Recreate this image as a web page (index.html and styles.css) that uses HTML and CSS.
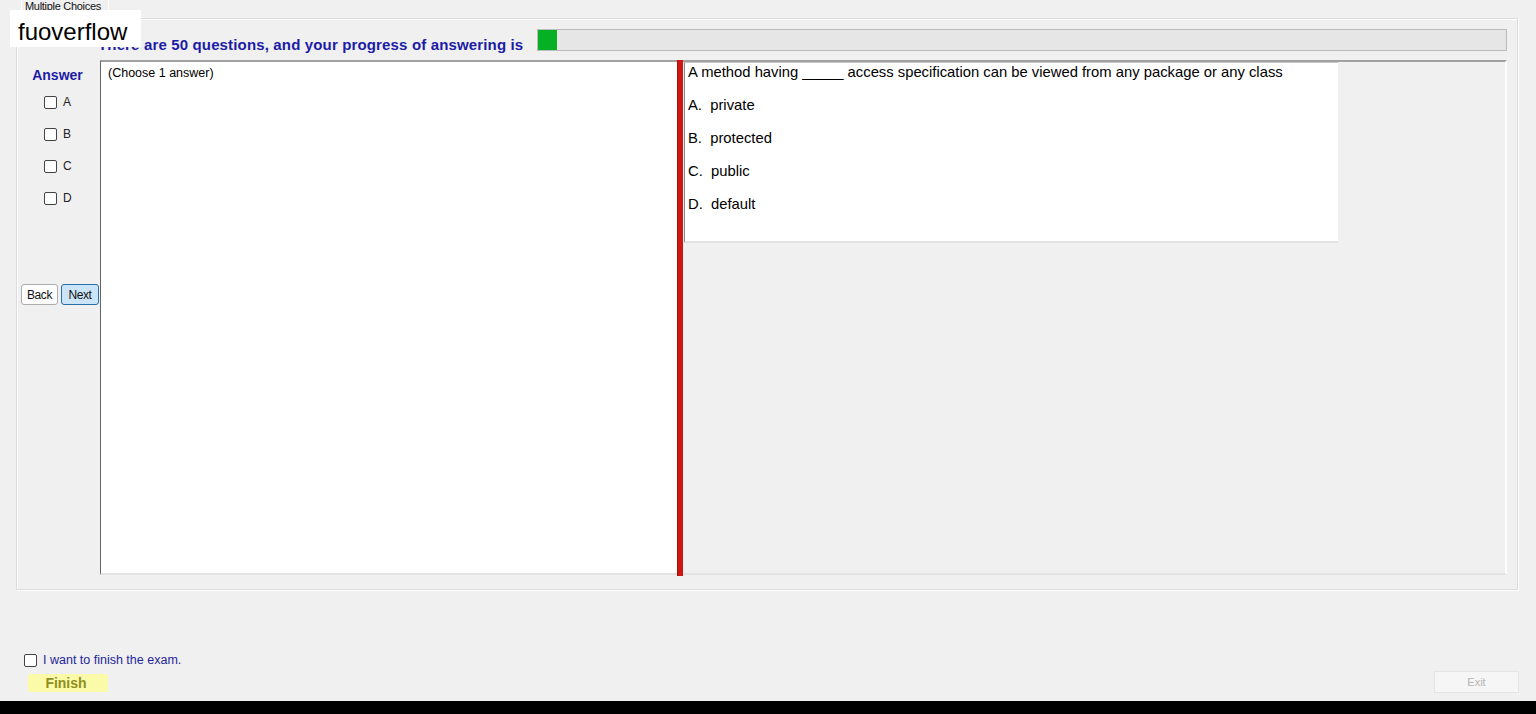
FILE: index.html
```html
<!DOCTYPE html>
<html lang="en">
<head>
    <meta charset="UTF-8">
    <meta name="viewport" content="width=device-width, initial-scale=1.0">
    <title>Multiple Choices</title>
    <link rel="stylesheet" href="styles.css">
</head>
<body>
    <div class="watermark">fuoverflow</div>

    <!-- Question group -->
    <div class="group">
        <div class="legend">Multiple Choices</div>

        <div class="header">
            <div class="progress-label">There are 50 questions, and your progress of answering is</div>
            <div class="progress">
                <div class="progress-fill" style="width: 19px"></div>
            </div>
        </div>

        <div class="content">
            <div class="sidebar">
                <div class="answer-title">Answer</div>
                <div class="choice"><span class="box"></span>A</div>
                <div class="choice"><span class="box"></span>B</div>
                <div class="choice"><span class="box"></span>C</div>
                <div class="choice"><span class="box"></span>D</div>
                <div class="nav">
                    <button class="btn">Back</button>
                    <button class="btn btn-active">Next</button>
                </div>
            </div>

            <div class="answer-panel">(Choose 1 answer)</div>
            <div class="splitter"></div>

            <div class="question-panel">
                <div class="question">
                    <p>A method having _____ access specification can be viewed from any package or any class</p>
                    <p>A.&nbsp; private</p>
                    <p>B.&nbsp; protected</p>
                    <p>C.&nbsp; public</p>
                    <p>D.&nbsp; default</p>
                </div>
            </div>
        </div>
    </div>

    <!-- Finish / exit -->
    <div class="footer">
        <div class="finish">
            <div class="finish-check"><span class="box"></span>I want to finish the exam.</div>
            <button class="finish-btn">Finish</button>
        </div>
        <button class="exit-btn" disabled>Exit</button>
    </div>
    <div class="taskbar"></div>
</body>
</html>
```

FILE: styles.css
```css
body {
    margin: 0;
    height: 714px;
    overflow: hidden;
    background-color: #f0f0f0;
    font-family: "Liberation Sans", Arial, sans-serif;
    color: #000;
    position: relative;
}
.watermark {
    position: absolute;
    left: 10px;
    top: 10px;
    width: 131px;
    height: 37px;
    overflow: hidden;
    box-sizing: border-box;
    padding-left: 8px;
    background-color: #fff;
    font-size: 24px;
    line-height: 43px;
    z-index: 2;
}
.group {
    position: relative;
    margin: 18px 18px 0 16px;
    height: 572px;
    box-sizing: border-box;
    border: 1px solid #dcdcdc;
    box-shadow: inset 1px 1px 0 #fff, 1px 1px 0 #fff;
    padding: 10px 10px 0 0;
}
.legend {
    position: absolute;
    left: 4px;
    top: -19px;
    width: 88px;
    height: 18px;
    box-sizing: border-box;
    border-left: 1px solid #fff;
    border-right: 1px solid #fff;
    padding-left: 3px;
    font-size: 11px;
    line-height: 13px;
    letter-spacing: -0.3px;
    color: #111;
}
.header {
    display: flex;
    align-items: flex-end;
    height: 22px;
}
.progress-label {
    width: 520px;
    flex: none;
    box-sizing: border-box;
    padding-left: 81px;
    font-size: 15px;
    font-weight: bold;
    letter-spacing: 0.15px;
    color: #1c1ca6;
    line-height: 16px;
    margin-bottom: -2px;
    white-space: nowrap;
}
.progress {
    flex: 1;
    height: 22px;
    box-sizing: border-box;
    border: 1px solid #bcbcbc;
    background-color: #e6e6e6;
}
.progress-fill {
    height: 100%;
    background-color: #06b025;
}
.content {
    display: flex;
    margin-top: 9px;
    height: 515px;
}
.sidebar {
    width: 83px;
    flex: none;
    padding-top: 7px;
}
.answer-title {
    text-align: center;
    font-size: 14px;
    font-weight: bold;
    color: #1c1ca6;
    line-height: 16px;
    margin-bottom: 3px;
    padding-right: 2px;
}
.choice {
    display: flex;
    align-items: center;
    height: 32px;
    padding-left: 27px;
    font-size: 12px;
    color: #222;
}
.box {
    display: inline-block;
    width: 11px;
    height: 11px;
    border: 1px solid #444;
    border-radius: 2px;
    background-color: #fff;
    margin-right: 6px;
}
.nav {
    display: flex;
    gap: 3px;
    margin-top: 70px;
    padding-left: 4px;
}
.btn {
    width: 37px;
    height: 21px;
    padding: 0;
    font-family: inherit;
    font-size: 12px;
    letter-spacing: -0.4px;
    border: 1px solid #adadad;
    border-radius: 3px;
    background-color: #fdfdfd;
    color: #111;
}
.btn-active {
    width: 38px;
    background-color: #cce4f7;
    border-color: #2b6fa8;
}
.answer-panel {
    width: 577px;
    flex: none;
    box-sizing: border-box;
    background-color: #fff;
    border-top: 2px solid #a0a0a0;
    border-left: 1px solid #646464;
    border-bottom: 2px solid #e3e3e3;
    padding: 4px 7px;
    font-size: 12.5px;
}
.splitter {
    width: 6px;
    flex: none;
    background-color: #d01515;
    border-left: 1px solid #a51010;
    box-sizing: border-box;
    margin-bottom: -1px;
}
.question-panel {
    flex: 1;
    border-top: 2px solid #a0a0a0;
    border-right: 2px solid #fff;
    border-bottom: 2px solid #e3e3e3;
}
.question {
    width: 654px;
    height: 181px;
    box-sizing: border-box;
    margin-left: 1px;
    background-color: #fff;
    border-left: 1px solid #8c8c8c;
    border-top: 1px solid #c8c8c8;
    border-bottom: 2px solid #e3e3e3;
    padding: 0 3px;
    font-size: 14.8px;
}
.question p {
    margin: 0;
    line-height: 18px;
    margin-bottom: 15px;
}
.footer {
    display: flex;
    justify-content: space-between;
    align-items: flex-end;
    height: 111px;
    box-sizing: border-box;
    padding: 0 17px 8px 24px;
}
.finish-check {
    display: flex;
    align-items: center;
    font-size: 12.5px;
    color: #25259a;
}
.finish-check .box {
    margin-right: 6px;
}
.finish-btn {
    display: block;
    margin: 7px 0 1px 4px;
    width: 80px;
    height: 18px;
    border: none;
    border-radius: 2px;
    background-color: #fafaa8;
    color: #8f8f1e;
    font-family: inherit;
    font-size: 14px;
    font-weight: bold;
    padding: 0 4px 0 0;
}
.exit-btn {
    width: 85px;
    height: 22px;
    border: 1px solid #e4e4e4;
    background-color: #f6f6f6;
    color: #b4b4b4;
    font-family: inherit;
    font-size: 11px;
}
.taskbar {
    height: 13px;
    background-color: #000;
}
```
